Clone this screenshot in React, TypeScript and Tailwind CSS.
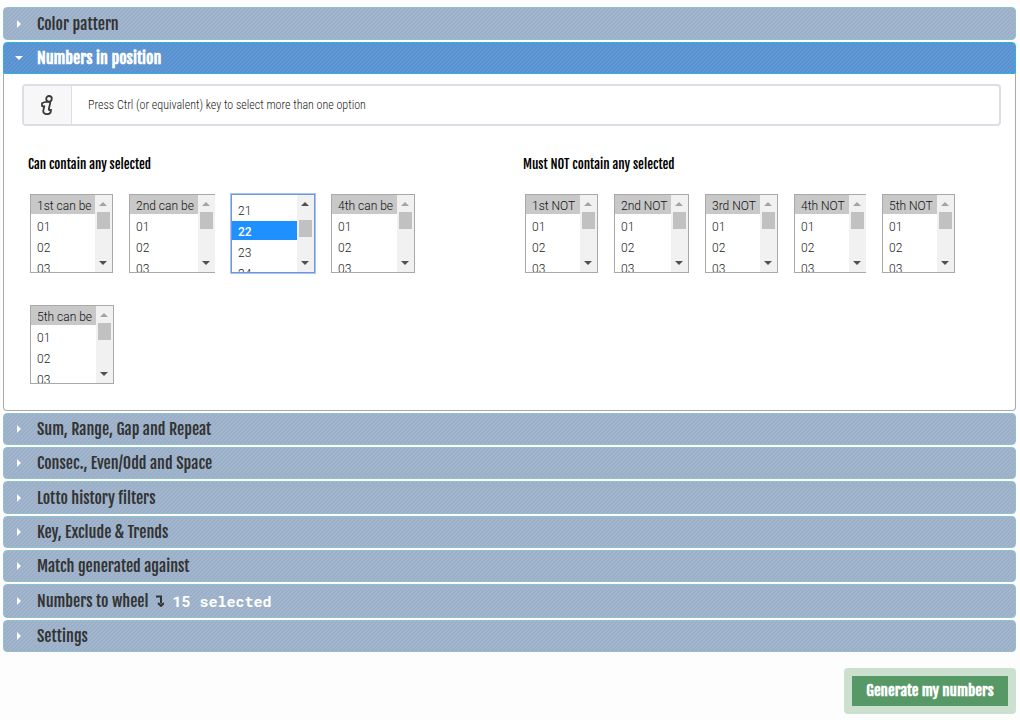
import React, { useLayoutEffect, useRef } from "react";

const numbers = Array.from({ length: 49 }, (_, i) => String(i + 1).padStart(2, "0"));

const titleFont = "font-['Fjalla_One','Roboto_Condensed','Liberation_Sans_Narrow',sans-serif]";

interface IList {
  label: string;
  width: string;
  selected?: string;
  clipped?: boolean;
}

const canBe: IList[] = [
  { label: "1st can be", width: "w-[83px]" },
  { label: "2nd can be", width: "w-[86px]", clipped: true },
  { label: "3rd can be", width: "w-[84px]", selected: "22" },
  { label: "4th can be", width: "w-[84px]" },
  { label: "5th can be", width: "w-[84px]" },
];

const mustNot: IList[] = [
  { label: "1st NOT", width: "w-[73px]" },
  { label: "2nd NOT", width: "w-[75px]" },
  { label: "3rd NOT", width: "w-[73px]" },
  { label: "4th NOT", width: "w-[72px]", clipped: true },
  { label: "5th NOT", width: "w-[73px]" },
];

const Header: React.FC<{ title: string; height?: string; open?: boolean; children?: React.ReactNode }> = ({
  title,
  height = "h-8",
  open,
  children,
}) => (
  <h3>
    <button
      aria-expanded={!!open}
      className={`${titleFont} ${height} flex w-full items-center border bg-[length:4px_4px] pl-[11px] text-left text-base ${
        open
          ? "rounded-t border-[#2fb1e0] bg-[linear-gradient(135deg,#5891cd_25%,#6099d6_25%_50%,#5891cd_50%_75%,#6099d6_75%)] font-bold text-white"
          : "rounded border-[#8fc0cc] bg-[linear-gradient(135deg,#9aafc7_25%,#a2b6ce_25%_50%,#9aafc7_50%_75%,#a2b6ce_75%)] text-[#333]"
      }`}
    >
      <svg className="mr-[14px] h-2 w-2 fill-white" viewBox="0 0 8 8">
        {open ? <path d="M0 2h8L4 6z" /> : <path d="M2 0v8l4-4z" />}
      </svg>
      <span>{title}</span>
      {children}
    </button>
  </h3>
);

const NumberList: React.FC<{ list: IList }> = ({ list }) => {
  const ref = useRef<HTMLSelectElement>(null);
  const active = !!list.selected;

  useLayoutEffect(() => {
    // keep one option visible above the selected one
    if (ref.current && list.selected) ref.current.scrollTop = Number(list.selected) * 21 - 26;
  }, [list.selected]);

  return (
    <div className={`relative h-[79px] ${list.width}`}>
      <select
        ref={ref}
        multiple
        size={4}
        aria-label={list.label}
        defaultValue={[list.selected ?? ""]}
        className={`block h-full w-full overflow-y-scroll border bg-white p-0 pr-[17px] font-['Roboto',sans-serif] text-[12px] text-[#222] outline-none [scrollbar-width:none] ${
          active ? "border-[#6f97dc] ring-1 ring-[#a9c4f3]" : "border-[#a9a9a9]"
        } ${list.clipped ? "border-r-0" : ""}`}
      >
        {["", ...numbers].map(n => (
          <option
            key={n}
            value={n}
            className={`mb-[2px] h-[19px] min-h-0 px-[6px] pt-1 pb-0 ${
              n === list.selected
                ? "bg-[linear-gradient(#1e90ff,#1e90ff)] font-medium text-white"
                : n === ""
                  ? "bg-[linear-gradient(#c8c8c8,#c8c8c8)] font-light"
                  : "font-light"
            }`}
          >
            {n || list.label}
          </option>
        ))}
      </select>
      <div
        aria-hidden="true"
        className={`pointer-events-none absolute inset-y-px flex w-[17px] flex-col items-center justify-between bg-[#f1f1f1] py-[7px] pr-px ${
          list.clipped ? "right-0" : "right-px"
        }`}
      >
        <svg className={`h-1 w-2 ${active ? "fill-[#505050]" : "fill-[#a3a3a3]"}`} viewBox="0 0 8 4">
          <path d="M0 4h8L4 0z" />
        </svg>
        <i className={`absolute h-[17px] w-[13px] bg-[#c1c1c1] ${active ? "top-[25px]" : "top-[17px]"}`} />
        <svg className="h-1 w-2 fill-[#505050]" viewBox="0 0 8 4">
          <path d="M0 0h8L4 4z" />
        </svg>
      </div>
    </div>
  );
};

const ListGroup: React.FC<{ title: string; lists: IList[] }> = ({ title, lists }) => (
  <section>
    <h4 className={`${titleFont} pl-[6px] text-[13px] leading-5 text-black`}>{title}</h4>
    <div className="mt-5 flex flex-wrap gap-x-4 gap-y-8 pr-4 pl-2">
      {lists.map(list => (
        <NumberList key={list.label} list={list} />
      ))}
    </div>
  </section>
);

const App: React.FC = () => {
  return (
    <main className="min-h-screen bg-[#fdfdfd] pt-[7px] pr-1 pb-[6px] pl-[3px]">
      <div className="flex flex-col gap-[2px]">
        <Header title="Color pattern" height="h-[33px]" />
        <div>
          <Header title="Numbers in position" open />
          <div className="rounded-b border border-t-0 border-[#aaa] bg-white pt-[10px] pr-[14px] pb-[26px] pl-[18px]">
            <div className="flex h-[42px] overflow-hidden rounded border-2 border-[#dbdfe3] bg-white">
              <div className="flex w-12 items-center justify-center border-r border-[#dbdfe3] bg-[#f7f7f7] pr-[2px]">
                <svg
                  className="h-5 w-3 fill-none stroke-[#3a3a3a] stroke-[1.8]"
                  viewBox="0 0 12 20"
                  strokeLinejoin="round"
                >
                  <circle cx="8" cy="3.800" r="2.800" />
                  <path d="M1 8.300c1.500-1 3-1.500 4.500-1.500h3.700c.3 2-1.400 5.500-1.400 7.700 0 .8.900.8 2.200.2 0 2.700-1.500 4.500-4 4.500-2.700 0-4-1.400-3.700-3.600l1-4.400c-.9.200-1.500.2-2.300-.3z" />
                </svg>
              </div>
              <p className="self-center pl-4 font-['Roboto_Condensed','Roboto',sans-serif] text-xs font-light text-[#222]">
                Press Ctrl (or equivalent) key to select more than one option
              </p>
            </div>
            <div className="mt-7 grid grid-cols-[495fr_484fr]">
              <ListGroup title="Can contain any selected" lists={canBe} />
              <ListGroup title="Must NOT contain any selected" lists={mustNot} />
            </div>
          </div>
        </div>
        <Header title="Sum, Range, Gap and Repeat" />
        <Header title="Consec., Even/Odd and Space" />
        <Header title="Lotto history filters" height="h-[33px]" />
        <Header title="Key, Exclude & Trends" />
        <Header title="Match generated against" />
        <Header title="Numbers to wheel" height="h-[34px]">
          <svg className="ml-2 h-3 w-2 fill-none stroke-[#333] stroke-2" viewBox="0 0 8 12">
            <path d="M0 1.500h5v7M2 8l3 3 3-3" />
          </svg>
          <span className="ml-2 font-['Roboto_Mono','DejaVu_Sans_Mono',monospace] text-[15px] font-bold text-white">
            15 selected
          </span>
        </Header>
        <Header title="Settings" />
      </div>
      <div className="mt-4 flex justify-end">
        <button
          className={`${titleFont} h-[46px] w-[172px] rounded border-8 border-[#cce0d0] bg-[#569966] bg-clip-padding text-[15px] font-bold text-white`}
        >
          Generate my numbers
        </button>
      </div>
    </main>
  );
};

export default App;
